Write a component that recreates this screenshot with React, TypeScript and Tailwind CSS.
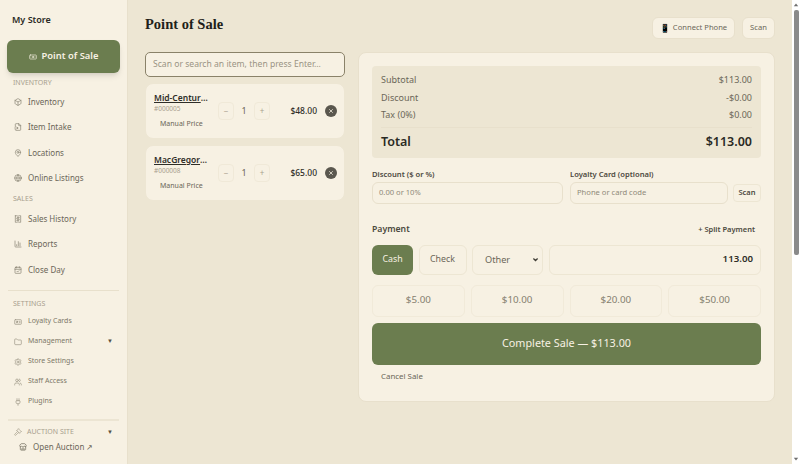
import {
  Banknote,
  Box,
  CalendarCheck,
  ChartColumn,
  FileInput,
  Folder,
  Globe,
  IdCard,
  MapPin,
  Plug,
  Receipt,
  Settings,
  Users,
  Store,
  X,
  Gavel,
} from "lucide-react"

const inventoryLinks = [
  { label: "Inventory", icon: Box },
  { label: "Item Intake", icon: FileInput },
  { label: "Locations", icon: MapPin },
  { label: "Online Listings", icon: Globe },
]

const salesLinks = [
  { label: "Sales History", icon: Receipt },
  { label: "Reports", icon: ChartColumn },
  { label: "Close Day", icon: CalendarCheck },
]

const settingsLinks = [
  { label: "Loyalty Cards", icon: IdCard },
  { label: "Management", icon: Folder, caret: true },
  { label: "Store Settings", icon: Settings },
  { label: "Staff Access", icon: Users },
  { label: "Plugins", icon: Plug },
]

const cartItems = [
  { name: "Mid-Century Lamp", sku: "#000005", price: "$48.00" },
  { name: "MacGregor Clubs", sku: "#000008", price: "$65.00" },
]

function Sidebar() {
  return (
    <aside className="flex h-[464px] w-[128px] shrink-0 flex-col overflow-hidden border-r border-[#e8e0cc] bg-[#f7f1e3] px-[7px]">
      <div className="flex h-[40px] items-center px-[5px] text-[9px] font-semibold text-[#2a2a24]">My Store</div>
      <div className="flex h-[33px] items-center justify-center gap-[5px] rounded-md bg-[#6b7d4f] text-[9.4px] font-semibold text-[#f7f1e3] shadow-md">
        <Banknote className="h-[8px] w-[8px]" />
        Point of Sale
      </div>
      <div className="mt-[4px] px-[6px] text-[7px] leading-[11px] text-[#a8a08e]">INVENTORY</div>
      <div className="mt-[1px] flex flex-col">
        {inventoryLinks.map((l) => (
          <div key={l.label} className="flex h-[25.5px] items-center gap-[6px] px-[7px] text-[8px] text-[#6b6658]">
            <l.icon className="h-[8px] w-[8px] text-[#85806f]" />
            {l.label}
          </div>
        ))}
      </div>
      <div className="mt-[2px] px-[6px] text-[7px] leading-[11px] text-[#a8a08e]">SALES</div>
      <div className="mt-[2px] flex flex-col">
        {salesLinks.map((l) => (
          <div key={l.label} className="flex h-[25.5px] items-center gap-[6px] px-[7px] text-[8px] text-[#6b6658]">
            <l.icon className="h-[8px] w-[8px] text-[#85806f]" />
            {l.label}
          </div>
        ))}
      </div>
      <div className="mx-[1px] mt-[7px] border-t border-[#e8e0cc]" />
      <div className="mt-[7px] px-[6px] text-[7px] leading-[11px] text-[#a8a08e]">SETTINGS</div>
      <div className="mt-[3px] flex flex-col">
        {settingsLinks.map((l) => (
          <div key={l.label} className="flex h-[20px] items-center gap-[6px] px-[7px] text-[7px] text-[#7d7868]">
            <l.icon className="h-[8px] w-[8px] text-[#9a9484]" />
            <span className="flex-1">{l.label}</span>
            {l.caret && <span className="text-[6px] text-[#55513f]">▼</span>}
          </div>
        ))}
      </div>
      <div className="mx-[1px] mt-[7px] border-t-2 border-[#ece5d3]" />
      <div className="mt-[5px] flex items-center gap-[5px] px-[7px] text-[7px] leading-[12px] text-[#a8a08e]">
        <Gavel className="h-[8px] w-[8px]" />
        <span className="flex-1">AUCTION SITE</span>
        <span className="text-[6px] text-[#55513f]">▼</span>
      </div>
      <div className="mt-[3px] flex items-center gap-[6px] px-[12px] text-[8px] text-[#6b6658]">
        <Store className="h-[8px] w-[8px]" />
        Open Auction ↗
      </div>
    </aside>
  )
}

function CartCard({ item }: { item: (typeof cartItems)[number] }) {
  return (
    <div className="flex h-[56px] items-center rounded-lg border border-[#ede6d3] bg-[#f7f1e3] pl-[8px] pr-[7px]">
      <div className="w-[54px] shrink-0">
        <div className="truncate text-[8.5px] font-semibold leading-[12px] text-[#2f2e28] underline">{item.name}</div>
        <div className="text-[6.5px] leading-[9px] text-[#a8a08e]">{item.sku}</div>
        <div className="mt-[4px] pl-[6px] text-[7px] leading-[14px] whitespace-nowrap text-[#6b6658]">Manual Price</div>
      </div>
      <div className="ml-[10px] flex items-center">
        <div className="flex h-[18px] w-[16px] items-center justify-center rounded border border-[#f0e9d8] text-[8px] text-[#a8a08e]">−</div>
        <div className="w-[20px] text-center text-[9px] text-[#6b6658]">1</div>
        <div className="flex h-[18px] w-[16px] items-center justify-center rounded border border-[#f0e9d8] text-[8px] text-[#a8a08e]">+</div>
      </div>
      <div className="ml-auto text-[8.5px] font-medium text-[#2f2e28]">{item.price}</div>
      <div className="ml-[8px] flex h-[12px] w-[12px] items-center justify-center rounded-full bg-[#5a574e]">
        <X className="h-[6px] w-[6px] text-[#f7f1e3]" strokeWidth={3} />
      </div>
    </div>
  )
}

function SummaryRow({ label, value }: { label: string; value: string }) {
  return (
    <div className="flex h-[17.5px] items-center justify-between text-[9px] text-[#6b6658]">
      <span>{label}</span>
      <span>{value}</span>
    </div>
  )
}

// the browser's page scrollbar, drawn because the page itself doesn't overflow here
function ScrollRail() {
  return (
    <div className="flex h-[464px] w-[8px] shrink-0 flex-col items-center bg-white">
      <svg viewBox="0 0 8 8" className="mt-[1px] h-[8px] w-[8px] shrink-0" fill="#6e6e6e">
        <path d="M4 2.5 6.2 5.2H1.8Z" />
      </svg>
      <div className="mt-[1px] h-[245px] w-[5px] rounded-[2px] bg-[#8a8a8a]" />
      <svg viewBox="0 0 8 8" className="mt-auto mb-[1px] h-[8px] w-[8px] shrink-0" fill="#6e6e6e">
        <path d="M4 5.5 6.2 2.8H1.8Z" />
      </svg>
    </div>
  )
}

export default function App() {
  return (
    <div className="flex h-[464px] overflow-hidden bg-[#ede6d3] font-['Noto_Sans',sans-serif]">
      <Sidebar />
      <main className="min-w-0 flex-1 pl-[17px] pr-[17px]">
        <div className="flex h-[52px] items-start justify-between">
          <h1 className="mt-[14px] font-['Liberation_Serif',serif] text-[14.5px] font-bold leading-[20px] text-[#1f1f1a]">Point of Sale</h1>
          <div className="mt-[17px] flex gap-[7px]">
            <div className="flex h-[22px] w-[83px] items-center justify-center gap-[3px] rounded-md border border-[#e8e0cc] bg-[#f7f1e3] text-[7.6px] text-[#6b6658]">
              <span className="text-[8px]">📱</span> Connect Phone
            </div>
            <div className="flex h-[22px] w-[33px] items-center justify-center rounded-md border border-[#e8e0cc] bg-[#f7f1e3] text-[7.6px] text-[#6b6658]">Scan</div>
          </div>
        </div>
        <div className="flex items-start gap-[13px]">
          <div className="flex w-[200px] shrink-0 flex-col gap-[6px]">
            <div className="flex h-[25px] items-center rounded-[5px] border border-[#8a8269] bg-[#f7f1e3] px-[7px] text-[8.6px] whitespace-nowrap text-[#9a9484]">
              Scan or search an item, then press Enter…
            </div>
            {cartItems.map((item) => (
              <CartCard key={item.sku} item={item} />
            ))}
          </div>
          <div className="h-[350px] flex-1 rounded-lg border border-[#e8e0cc] bg-[#f7f1e3] px-[13px] pt-[13px]">
            <div className="rounded bg-[#ede6d3] px-[9px] pt-[5px]">
              <SummaryRow label="Subtotal" value="$113.00" />
              <SummaryRow label="Discount" value="-$0.00" />
              <SummaryRow label="Tax (0%)" value="$0.00" />
              <div className="mt-[3px] flex h-[31px] items-center justify-between border-t border-[#e8e0cc] text-[12.5px] font-semibold text-[#2a2a24]">
                <span>Total</span>
                <span>$113.00</span>
              </div>
            </div>
            <div className="mt-[11px] flex items-end gap-[7px]">
              <div className="w-[191px]">
                <div className="text-[7.6px] font-semibold leading-[11px] text-[#4c493e]">Discount ($ or %)</div>
                <div className="mt-[2px] flex h-[22px] items-center rounded-md border border-[#e8e0cc] px-[6px] text-[7.6px] text-[#8f8979]">0.00 or 10%</div>
              </div>
              <div className="w-[158px]">
                <div className="text-[7.6px] font-semibold leading-[11px] text-[#4c493e]">Loyalty Card (optional)</div>
                <div className="mt-[2px] flex h-[22px] items-center rounded-md border border-[#e8e0cc] px-[6px] text-[7.6px] text-[#8f8979]">Phone or card code</div>
              </div>
              <div className="mb-[2px] ml-[-2px] flex h-[18px] flex-1 items-center justify-center rounded border border-[#ede6d3] text-[7.5px] font-semibold text-[#4c493e]">Scan</div>
            </div>
            <div className="mt-[20px] flex h-[12px] items-center justify-between">
              <span className="text-[8.7px] font-semibold text-[#4c493e]">Payment</span>
              <span className="pr-[6px] text-[7.5px] font-semibold text-[#4c493e]">+ Split Payment</span>
            </div>
            <div className="mt-[9px] flex h-[30px] gap-[5.5px]">
              <div className="flex w-[41px] items-center justify-center rounded-md bg-[#6b7d4f] text-[8.8px] text-[#f7f1e3]">Cash</div>
              <div className="flex w-[48px] items-center justify-center rounded-md border border-[#ede6d3] text-[8.8px] text-[#6b6658]">Check</div>
              <div className="flex w-[71px] items-center justify-between rounded-md border border-[#ede6d3] pl-[12px] pr-[3px] text-[9.2px] text-[#6b6658]">
                Other
                <svg viewBox="0 0 10 10" className="h-[7px] w-[7px]" fill="none" stroke="#3f3d35" strokeWidth="1.8">
                  <path d="M2 3.5 5 6.5 8 3.5" />
                </svg>
              </div>
              <div className="flex flex-1 items-center justify-end rounded-md border border-[#ede6d3] pr-[7px] text-[9.7px] font-semibold text-[#2f2e28]">113.00</div>
            </div>
            <div className="mt-[10px] grid h-[32px] grid-cols-4 gap-[6px]">
              {["$5.00", "$10.00", "$20.00", "$50.00"].map((v) => (
                <div key={v} className="flex items-center justify-center rounded-md border border-[#f1ead9] text-[9.8px] text-[#85806f]">{v}</div>
              ))}
            </div>
            <div className="mt-[6px] flex h-[42px] items-center justify-center rounded-md bg-[#6b7d4f] text-[10.8px] text-[#f7f1e3]">Complete Sale — $113.00</div>
            <div className="mt-[5px] pl-[9px] text-[7.9px] leading-[12px] text-[#6b6658]">Cancel Sale</div>
          </div>
        </div>
      </main>
      <ScrollRail />
    </div>
  )
}
